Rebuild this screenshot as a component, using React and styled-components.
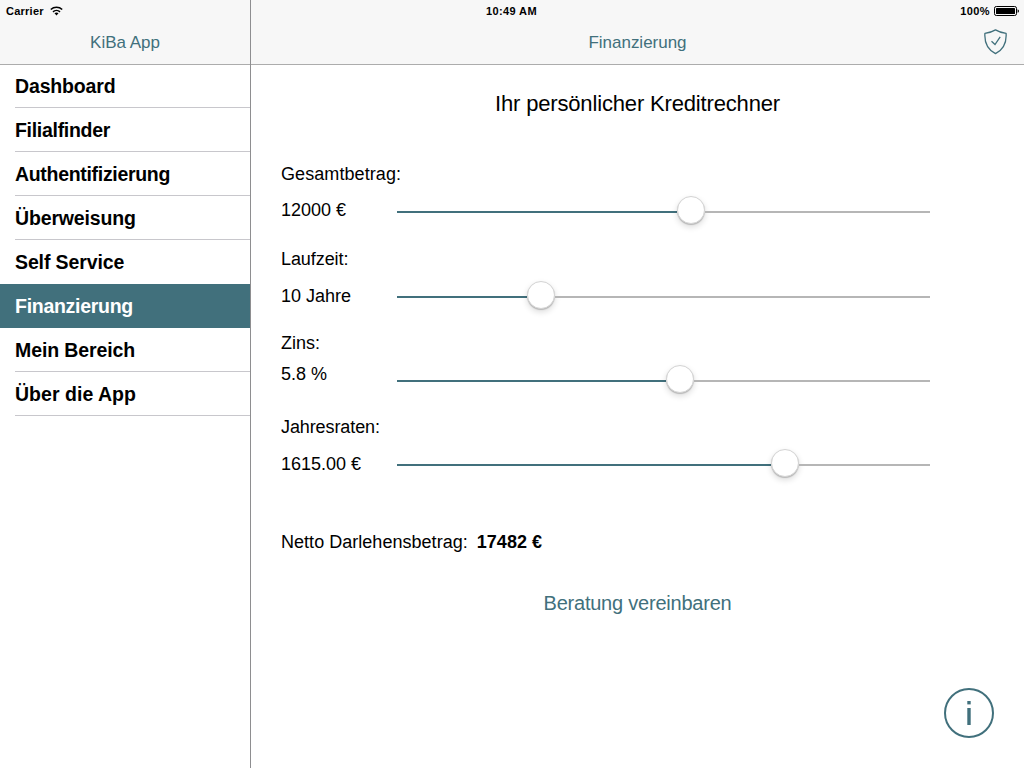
import React from "react";
import styled, { createGlobalStyle } from "styled-components";

const TEAL = "#41707c";

const Global = createGlobalStyle`
  * { box-sizing: border-box; }
  body {
    margin: 0;
    background: #fff;
    color: #000;
    font-family: "Liberation Sans", Arial, sans-serif;
  }
`;

const Screen = styled.div`
  display: flex;
  width: 1024px;
  height: 768px;
  overflow: hidden;
`;

const Sidebar = styled.aside`
  width: 251px;
  flex: none;
  border-right: 1px solid #8e8e90;
`;

const Main = styled.main`
  flex: 1;
  display: flex;
  flex-direction: column;
`;

const Header = styled.header`
  height: 65px;
  background: #f7f7f7;
  border-bottom: 1px solid #acacac;
`;

const StatusBar = styled.div`
  display: flex;
  align-items: center;
  height: 20px;
  padding: 2px 5px 0 ${(p) => p.$left}px;
  font-size: 11px;
  font-weight: 700;
  line-height: 18px;
  letter-spacing: ${(p) => p.$track || 0}px;
`;

const Charge = styled.span`
  display: flex;
  align-items: center;
  gap: 4px;
  margin-left: auto;
`;

const NavBar = styled.div`
  display: grid;
  grid-template-columns: 44px 1fr 44px;
  align-items: center;
  height: 44px;
  color: ${TEAL};
`;

const NavTitle = styled.h1`
  grid-column: 2;
  margin: 0;
  padding-top: 2px;
  font-size: 17px;
  font-weight: 400;
  line-height: 20px;
  text-align: center;
  letter-spacing: -0.02px;
`;

const Menu = styled.nav`
  display: flex;
  flex-direction: column;
`;

const MenuItem = styled.a`
  height: 44px;
  padding-left: 15px;
  margin-top: ${(p) => (p.$first ? "-1px" : "0")};
  color: ${(p) => (p.$active ? "#fff" : "#000")};
  background: ${(p) => (p.$active ? TEAL : "transparent")};
`;

const MenuLabel = styled.span`
  display: block;
  height: 44px;
  border-bottom: 1px solid ${(p) => (p.$line ? "#c8c7cc" : "transparent")};
  font-size: 19.5px;
  font-weight: 700;
  line-height: 44px;
  letter-spacing: ${(p) => p.$track}px;
`;

const Content = styled.section`
  flex: 1;
  display: flex;
  flex-direction: column;
  padding: 26px 30px 30px;
  font-size: 18px;
`;

const Heading = styled.h2`
  margin: 0 0 47px;
  font-size: 22px;
  font-weight: 400;
  line-height: 26px;
  text-align: center;
  letter-spacing: -0.16px;
`;

const Field = styled.div`
  display: grid;
  grid-template-columns: 116.4px 532.2px;
  grid-template-rows: 22px 1fr;
  height: 84px;
`;

const FieldName = styled.span`
  grid-column: 1 / -1;
  line-height: 20px;
  padding-top: ${(p) => p.$drop || 0}px;
  letter-spacing: ${(p) => p.$track || 0}px;
`;

const FieldValue = styled.span`
  line-height: 20px;
  padding-top: ${(p) => p.$drop}px;
`;

const Slider = styled.div`
  display: flex;
  align-items: center;
  height: 28px;
  margin-top: ${(p) => p.$drop}px;
`;

const Track = styled.div`
  height: 2px;
  margin-top: 4px;
  flex: ${(p) => (p.$filled ? "none" : 1)};
  background: ${(p) => (p.$filled ? TEAL : "#b6b6b6")};
`;

const Thumb = styled.div`
  width: 28px;
  height: 28px;
  flex: none;
  border: 0.5px solid #d4d4d4;
  border-radius: 50%;
  background: #fff;
  box-shadow: 0 1px 1px rgba(0, 0, 0, 0.2), 0 3px 6px rgba(0, 0, 0, 0.14);
`;

const Result = styled.p`
  display: flex;
  gap: 9px;
  margin: 32px 0 0;
  line-height: 20px;
  letter-spacing: 0.03px;
`;

const Amount = styled.span`
  font-weight: 700;
`;

const Booking = styled.button`
  align-self: center;
  margin: 39px 0 0;
  padding: 0;
  border: 0;
  background: none;
  color: ${TEAL};
  font: 20px/24px "Liberation Sans", Arial, sans-serif;
  letter-spacing: -0.22px;
`;

const InfoButton = styled.button`
  align-self: flex-end;
  width: 50px;
  height: 50px;
  margin-top: auto;
  padding: 0;
  border: 0;
  background: none;
`;

const ShieldIcon = styled.svg`
  justify-self: end;
  margin-right: 16px;
`;

const WifiIcon = styled.svg`
  margin-left: 6px;
`;

const menu = [
  ["Dashboard", -0.15],
  ["Filialfinder", -0.3],
  ["Authentifizierung", -0.31],
  ["Überweisung", -0.15],
  ["Self Service", -0.12],
  ["Finanzierung", -0.28],
  ["Mein Bereich", -0.1],
  ["Über die App", 0.03],
];

const fields = [
  { name: "Gesamtbetrag:", value: "12000 €", fill: 280, track: 0.08, drop: 14, slide: 10 },
  { name: "Laufzeit:", value: "10 Jahre", fill: 130, track: -0.08, nameDrop: 1, drop: 16, slide: 11 },
  { name: "Zins:", value: "5.8 %", fill: 269, nameDrop: 1, drop: 10, slide: 11 },
  { name: "Jahresraten:", value: "1615.00 €", fill: 374, track: -0.1, nameDrop: 1, drop: 16, slide: 11 },
];

function Wifi() {
  return (
    <WifiIcon width="13" height="10" viewBox="0 0 13 10">
      <g fill="none" stroke="#000" strokeWidth="1.6">
        <path d="M.8 3.5C4 .5 9 .5 12.200 3.500" />
        <path d="M3 5.800C5 4 8 4 10 5.800" />
      </g>
      <path d="M4.500 7.200Q6.500 5.700 8.500 7.200L6.500 9.400Z" />
    </WifiIcon>
  );
}

function Battery() {
  return (
    <svg width="25" height="10" viewBox="0 0 25 10">
      <rect x=".5" y=".5" width="22" height="9" rx="1.8" fill="none" stroke="#000" />
      <rect x="2" y="2" width="19" height="6" rx=".6" />
      <path d="M23.600 3.200Q25 3.600 25 5Q25 6.400 23.600 6.800Z" />
    </svg>
  );
}

function Shield() {
  return (
    <ShieldIcon width="24" height="26" viewBox="0 0 24 26" fill="none" stroke={TEAL} strokeWidth="1.3">
      <path d="M11.500 .9C8.500 2.700 5 3.900 .9 4.400C.3 13.500 3.500 20.500 11.500 24.700C19.500 20.500 22.700 13.500 22.100 4.400C18 3.900 14.500 2.700 11.500 .9Z" strokeLinejoin="round" />
      <path d="M7.500 12.300L11 15.500L16.200 7.900" />
    </ShieldIcon>
  );
}

export default function App() {
  return (
    <>
      <Global />
      <Screen>
        <Sidebar>
          <Header>
            <StatusBar $left={6} $track={0.25}>
              Carrier
              <Wifi />
            </StatusBar>
            <NavBar>
              <NavTitle>KiBa App</NavTitle>
            </NavBar>
          </Header>
          <Menu>
            {menu.map(([label, track], i) => (
              <MenuItem key={label} $first={i === 0} $active={label === "Finanzierung"}>
                <MenuLabel $track={track} $line={i !== 4 && i !== 5}>{label}</MenuLabel>
              </MenuItem>
            ))}
          </Menu>
        </Sidebar>
        <Main>
          <Header>
            <StatusBar $left={235} $track={0.38}>
              10:49 AM
              <Charge>
                100%
                <Battery />
              </Charge>
            </StatusBar>
            <NavBar>
              <NavTitle>Finanzierung</NavTitle>
              <Shield />
            </NavBar>
          </Header>
          <Content>
            <Heading>Ihr persönlicher Kreditrechner</Heading>
            {fields.map((f) => (
              <Field key={f.name}>
                <FieldName $drop={f.nameDrop} $track={f.track}>{f.name}</FieldName>
                <FieldValue $drop={f.drop}>{f.value}</FieldValue>
                <Slider $drop={f.slide}>
                  <Track $filled style={{ width: f.fill }} />
                  <Thumb />
                  <Track />
                </Slider>
              </Field>
            ))}
            <Result>
              <span>Netto Darlehensbetrag:</span>
              <Amount>17482 €</Amount>
            </Result>
            <Booking>Beratung vereinbaren</Booking>
            <InfoButton aria-label="Info">
              <svg width="50" height="50" viewBox="0 0 50 50">
                <circle cx="25" cy="25" r="24" fill="none" stroke={TEAL} strokeWidth="2" />
                <rect x="23.300" y="13" width="3.400" height="3.400" fill={TEAL} />
                <rect x="23.300" y="20" width="3.400" height="17" fill={TEAL} />
              </svg>
            </InfoButton>
          </Content>
        </Main>
      </Screen>
    </>
  );
}
